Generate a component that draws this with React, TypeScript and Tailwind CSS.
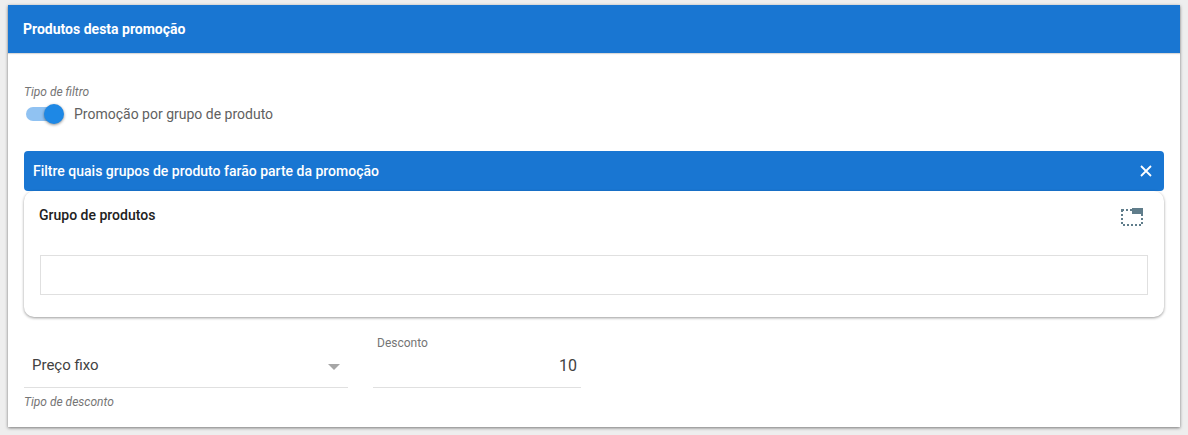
export default function App() {
  return (
    <div className="w-[1188px] h-[435px] overflow-hidden bg-[#eeeeee] pt-[5px] px-2 font-['Roboto',sans-serif]">
      <div className="h-[422px] bg-white shadow-[0_1px_3px_rgba(0,0,0,0.5)]">
        <div className="h-12 bg-[#1976d2] flex items-center px-[15px] text-[14px] font-bold text-white shadow-[0_1px_1px_rgba(0,0,0,0.15)]">
          Produtos desta promoção
        </div>
        <div className="px-4">
          <div className="pt-[32px] h-[51px] text-[12px] leading-[14px] italic text-[#757575]">Tipo de filtro</div>
          <div className="flex items-center h-[20px]">
            <div className="relative w-[34px] h-[14px] ml-[2px] rounded-full bg-[#90c2f2]">
              <div className="absolute left-[18px] -top-[3px] w-5 h-5 rounded-full bg-[#1e88e5] shadow-[0_1px_3px_rgba(0,0,0,0.45)]"></div>
            </div>
            <span className="ml-[14px] text-[14px] text-[#616161]">Promoção por grupo de produto</span>
          </div>
          <div className="mt-[27px] h-10 rounded bg-[#1976d2] flex items-center justify-between pl-[9px] pr-[12px] text-white text-[14px] font-medium">
            <span>Filtre quais grupos de produto farão parte da promoção</span>
            <svg width="12" height="12" viewBox="0 0 12 12" fill="none" stroke="white" strokeWidth="1.8"><path d="M1 1l10 10M11 1L1 11" /></svg>
          </div>
          <div className="h-[126px] rounded-[10px] bg-white pl-[15px] pr-4 shadow-[0_1px_3px_rgba(0,0,0,0.4)]">
            <div className="flex justify-between h-[64px]">
              <span className="pt-4 text-[14px] leading-4 font-medium text-[#212121]">Grupo de produtos</span>
              <svg className="mt-[17px] mr-[5px]" width="22" height="18" viewBox="0 0 22 18" fill="none">
                <rect x="1" y="2" width="20" height="15" stroke="#607d8b" strokeWidth="2" strokeDasharray="2 2" />
                <rect x="11" y="0" width="11" height="6" fill="#607d8b" />
              </svg>
            </div>
            <div className="h-10 ml-px border border-[#e0e0e0]"></div>
          </div>
          <div className="flex gap-[25px]">
            <div className="w-[324px]">
              <div className="h-[71px] border-b border-[#e0e0e0] flex items-end justify-between pb-[13px] pl-2 pr-[8px]">
                <span className="text-[15px] leading-[18px] text-[#424242]">Preço fixo</span>
                <span className="mb-[4px] w-0 h-0 border-x-[6px] border-x-transparent border-t-[6px] border-t-[#a6a6a6]"></span>
              </div>
              <div className="mt-[7px] text-[12px] leading-[14px] italic text-[#757575]">Tipo de desconto</div>
            </div>
            <div className="w-[208px] h-[71px] border-b border-[#e0e0e0] px-1 pt-[19px]">
              <div className="text-[12px] leading-[14px] text-[#757575]">Desconto</div>
              <div className="mt-[6px] text-right text-[16px] leading-[20px] text-[#424242]">10</div>
            </div>
          </div>
        </div>
      </div>
    </div>
  );
}
